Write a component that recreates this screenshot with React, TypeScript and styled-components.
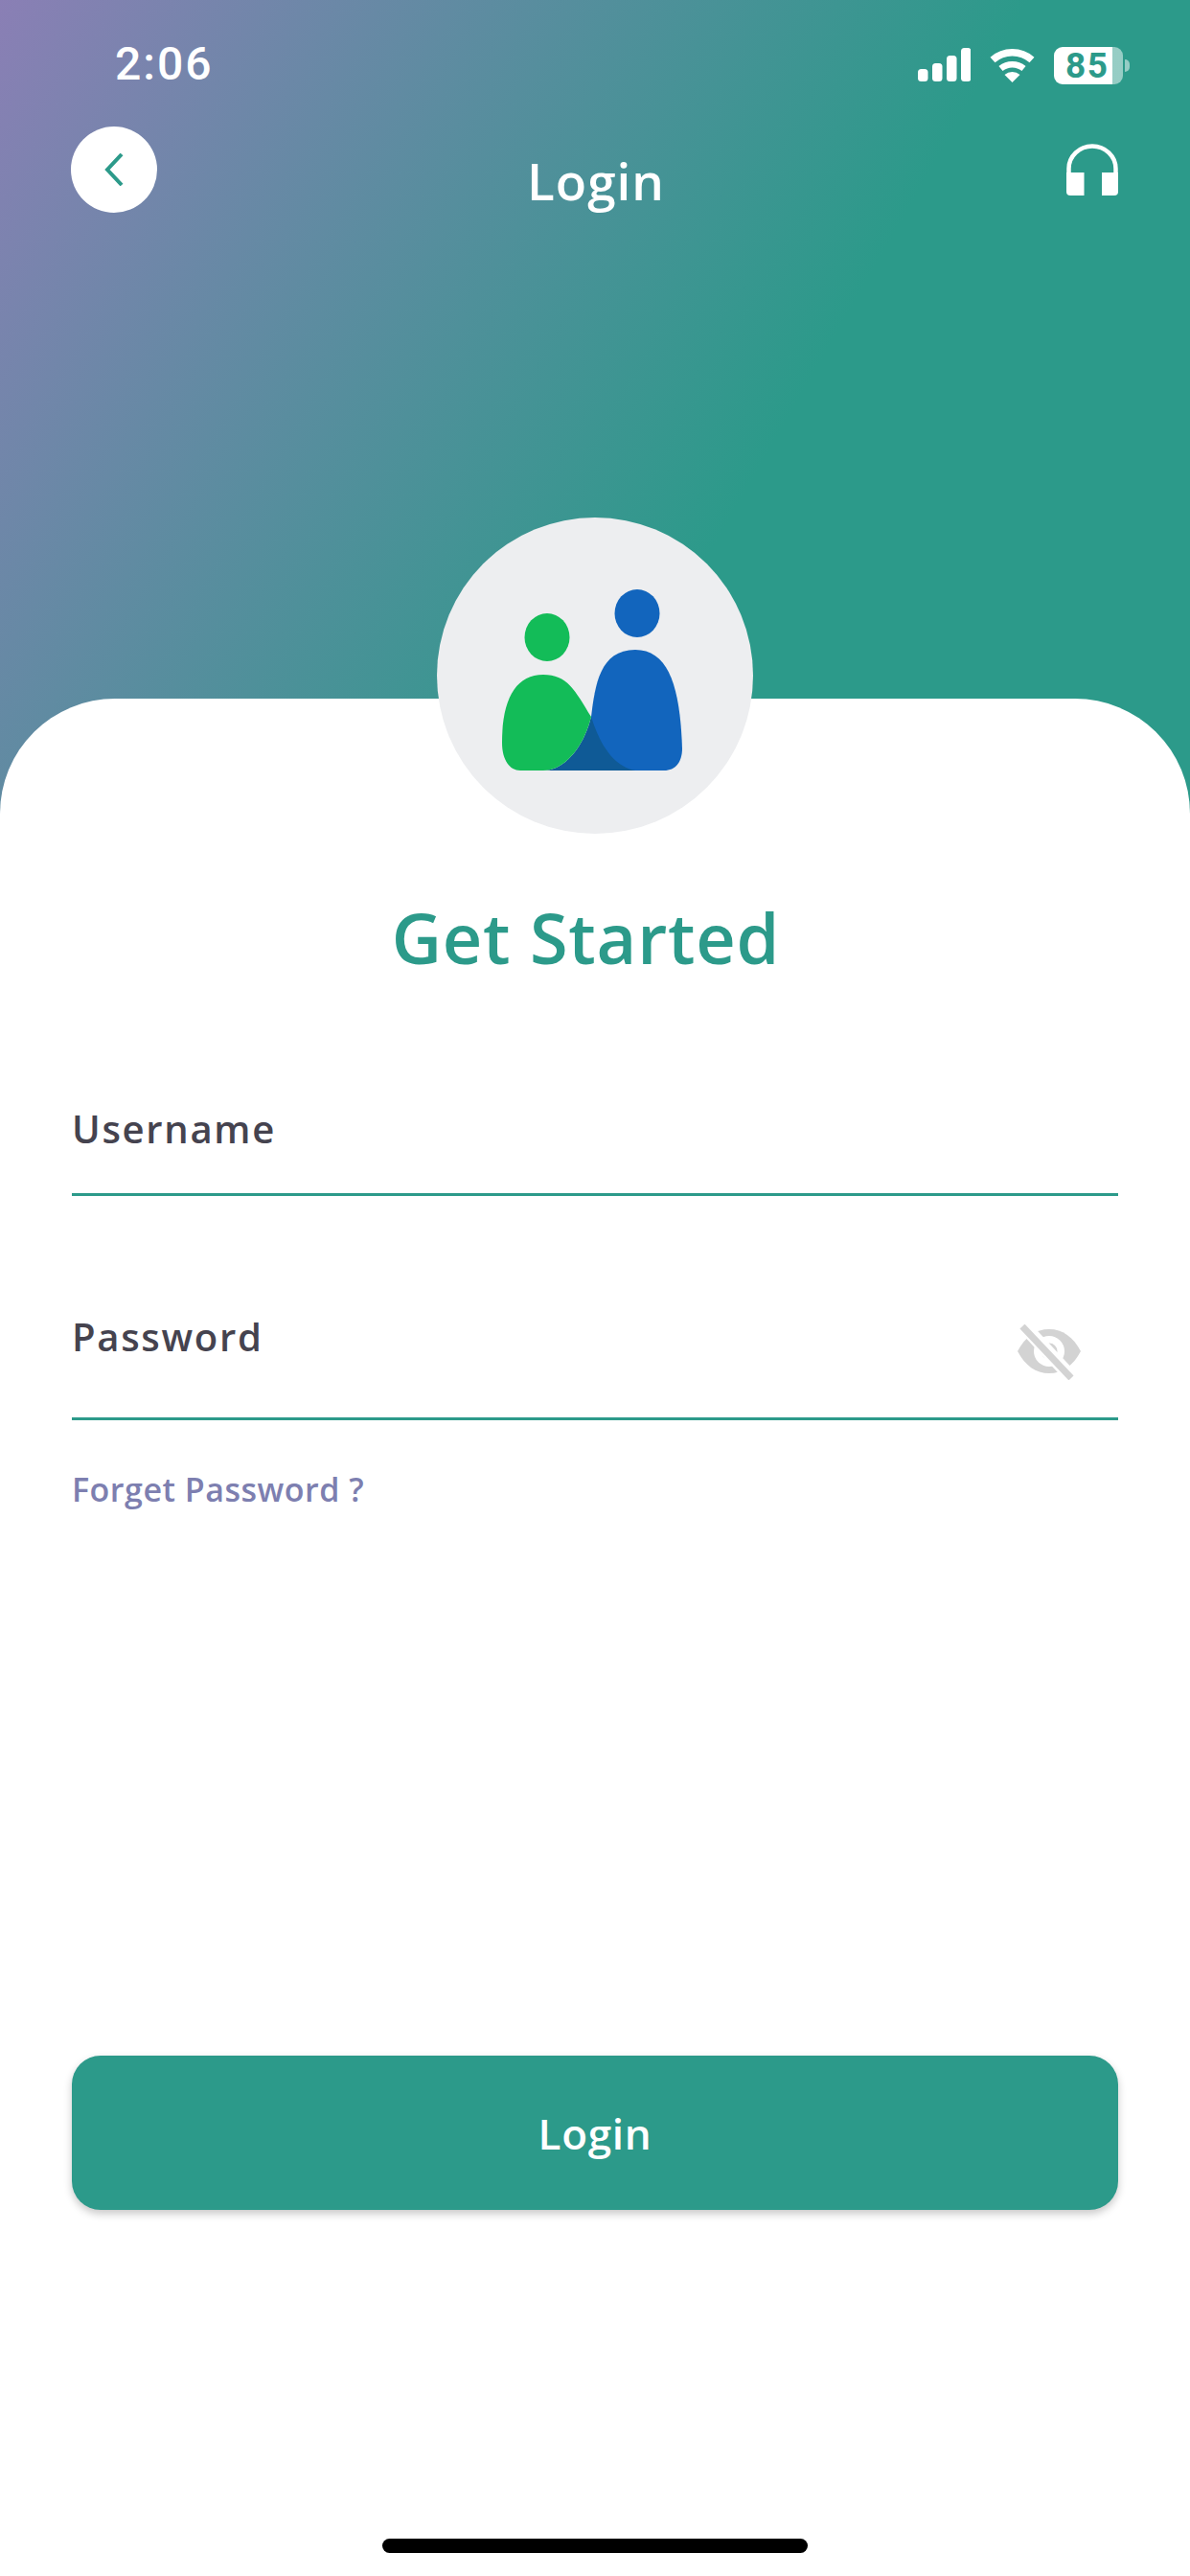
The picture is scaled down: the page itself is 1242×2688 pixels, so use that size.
import React from "react";
import styled, { createGlobalStyle } from "styled-components";

const teal = "#2c9a8a";
const sans = `"Open Sans", "Noto Sans", sans-serif`;

const Global = createGlobalStyle`
  html, body { margin: 0; padding: 0; background: #fff; }
  * { box-sizing: border-box; }
`;

const Page = styled.div`
  width: 1242px;
  height: 2688px;
  display: flex;
  flex-direction: column;
  overflow: hidden;
  background: #fff;
  font-family: ${sans};
`;

const Hero = styled.header`
  height: 850px;
  flex: none;
  background: linear-gradient(120deg, #8a7fb5 0%, ${teal} 62%);
  color: #fff;
`;

const StatusBar = styled.div`
  height: 132px;
  padding: 43px 70px 0 120px;
  display: flex;
  justify-content: space-between;
  align-items: flex-start;
`;

const Clock = styled.span`
  font: 500 48px/48px Roboto, sans-serif;
  letter-spacing: 2px;
`;

const StatusIcons = styled.div`
  display: flex;
  align-items: center;
  gap: 20px;
  height: 50px;
`;

const Battery = styled.span`
  position: relative;
  width: 72px;
  height: 39px;
  border-radius: 9px;
  background: linear-gradient(90deg, #fff 0 61px, rgba(255, 255, 255, 0.5) 61px 100%);
  color: ${teal};
  font: 700 37px/40px Roboto, sans-serif;
  padding-left: 12px;
  letter-spacing: 1.5px;
  &::after {
    content: "";
    position: absolute;
    right: -7px;
    top: 13px;
    width: 5px;
    height: 13px;
    border-radius: 0 6px 6px 0;
    background: rgba(255, 255, 255, 0.5);
  }
`;

const Nav = styled.nav`
  height: 90px;
  padding: 0 75px 0 74px;
  display: grid;
  grid-template-columns: 1fr auto 1fr;
  align-items: center;
`;

const BackButton = styled.button`
  width: 90px;
  height: 90px;
  padding: 0;
  border: 0;
  border-radius: 50%;
  background: #fff;
  display: flex;
  align-items: center;
  justify-content: center;
`;

const NavTitle = styled.h1`
  margin: 24px 0 0 3px;
  font: 600 53px/66px ${sans};
  letter-spacing: 1px;
  color: #fff;
`;

const HeadsetButton = styled.div`
  justify-self: end;
  width: 54px;
  height: 54px;
`;

const Card = styled.main`
  flex: 1;
  margin-top: -121px;
  background: #fff;
  border-radius: 120px 120px 0 0;
  display: flex;
  flex-direction: column;
  align-items: stretch;
  padding: 0 75px;
`;

const Avatar = styled.div`
  width: 330px;
  height: 330px;
  margin: -189px auto 0;
  border-radius: 50%;
  background: #edeef0;
  display: flex;
  align-items: center;
  justify-content: center;
`;

const Heading = styled.h2`
  margin: 59px 19px 0 0;
  text-align: center;
  font: 600 72px/98px ${sans};
  letter-spacing: 0.8px;
  color: ${teal};
`;

const Field = styled.div<{ $height: number; $gap: number }>`
  margin-top: ${(p) => p.$gap}px;
  height: ${(p) => p.$height}px;
  border-bottom: 3px solid ${teal};
  display: flex;
  justify-content: space-between;
  align-items: flex-start;
`;

const Label = styled.label`
  font: 600 40px/56px ${sans};
  color: #45434f;
  letter-spacing: 1.7px;
`;

const EyeIcon = styled.svg`
  margin: 15px 38px 0 0;
`;

const LogoIcon = styled.svg`
  margin: 8px 6px 0 0;
`;

const ForgotLink = styled.a`
  margin-top: 49px;
  font: 600 34px/46px ${sans};
  color: #7d7fb0;
  letter-spacing: 0.5px;
`;

const LoginButton = styled.button`
  height: 161px;
  border: 0;
  border-radius: 30px;
  background: ${teal};
  color: #fff;
  font: 600 44px/60px ${sans};
  letter-spacing: 0.7px;
  box-shadow: 0 4px 8px rgba(0, 0, 0, 0.22);
`;

const Spacer = styled.div`
  flex: 1;
`;

const HomeBar = styled.div`
  width: 444px;
  height: 15px;
  margin: 343px auto 24px;
  background: #000;
  border-radius: 8px;
`;

const Signal = () => (
  <svg width="55" height="36" viewBox="0 0 55 36" fill="#fff">
    <rect x="0" y="22" width="10.5" height="13" rx="3.5" />
    <rect x="15" y="16" width="10.5" height="19" rx="3.5" />
    <rect x="30" y="8" width="10.5" height="27" rx="3.5" />
    <rect x="45" y="0" width="10.5" height="35" rx="3.5" />
  </svg>
);

const Wifi = () => (
  <svg width="47" height="36" viewBox="0 0 47 36" fill="none" stroke="#fff">
    <path d="M3 12.5 A31 31 0 0 1 44 12.5" strokeWidth="7.5" />
    <path d="M11.5 21.5 A19 19 0 0 1 35.5 21.5" strokeWidth="6.5" />
    <path d="M23.5 36 L15.5 28 A12 12 0 0 1 31.5 28 Z" fill="#fff" stroke="none" />
  </svg>
);

const Chevron = () => (
  <svg width="20" height="34" viewBox="0 0 20 34" fill="none" stroke={teal} strokeWidth="4">
    <path d="M18 1 L3 17 L18 33" />
  </svg>
);

const Headset = () => (
  <svg width="54" height="54" viewBox="0 0 54 54" fill="#fff">
    <path d="M2.5 32 V26 A24.5 23.5 0 0 1 51.5 26 V32" fill="none" stroke="#fff" strokeWidth="4.5" />
    <path d="M0 30 H18.5 V54 H4 Q0 54 0 50 Z" />
    <path d="M54 30 H37 V54 H50 Q54 54 54 50 Z" />
  </svg>
);

const Eye = () => (
  <EyeIcon width="68" height="58" viewBox="0 0 68 58">
    <path d="M1 28 C9 13 20 5 34 5 C48 5 59 13 67 28 C59 43 48 51 34 51 C20 51 9 43 1 28 Z" fill="#d3d3d3" />
    <circle cx="34" cy="28" r="16" fill="#fff" />
    <circle cx="34" cy="28" r="8.5" fill="#d3d3d3" />
    <path d="M7 1 L58 56" stroke="#fff" strokeWidth="14" />
    <path d="M6 2 L57 56" stroke="#d3d3d3" strokeWidth="7" />
  </EyeIcon>
);

const Logo = () => (
  <LogoIcon width="188" height="189" viewBox="0 0 188 189">
    <ellipse cx="47" cy="50" rx="23.5" ry="25" fill="#13bc58" />
    <ellipse cx="141" cy="25" rx="23.5" ry="25" fill="#1265bd" />
    <path d="M93 133 C97 100 102 63 139 63 C175 63 186 105 188 166 C188 180 181 189 169 189 L90 189 Z" fill="#1265bd" />
    <path d="M93 133 C103 165 118 185 139 189 L43 189 C65 189 85 165 93 133 Z" fill="#0f5a96" />
    <path d="M19 189 C8 189 0 178 0 160 C0 115 14 89 43 89 C68 89 76 105 93 133 C85 165 65 189 43 189 Z" fill="#13bc58" />
  </LogoIcon>
);

export default function App() {
  return (
    <Page>
      <Global />
      <Hero>
        <StatusBar>
          <Clock>2:06</Clock>
          <StatusIcons>
            <Signal />
            <Wifi />
            <Battery>85</Battery>
          </StatusIcons>
        </StatusBar>
        <Nav>
          <BackButton aria-label="Back">
            <Chevron />
          </BackButton>
          <NavTitle>Login</NavTitle>
          <HeadsetButton>
            <Headset />
          </HeadsetButton>
        </Nav>
      </Hero>
      <Card>
        <Avatar>
          <Logo />
        </Avatar>
        <Heading>Get Started</Heading>
        <Field $height={98} $gap={123}>
          <Label>Username</Label>
        </Field>
        <Field $height={115} $gap={119}>
          <Label>Password</Label>
          <Eye />
        </Field>
        <ForgotLink>Forget Password ?</ForgotLink>
        <Spacer />
        <LoginButton>Login</LoginButton>
        <HomeBar />
      </Card>
    </Page>
  );
}
